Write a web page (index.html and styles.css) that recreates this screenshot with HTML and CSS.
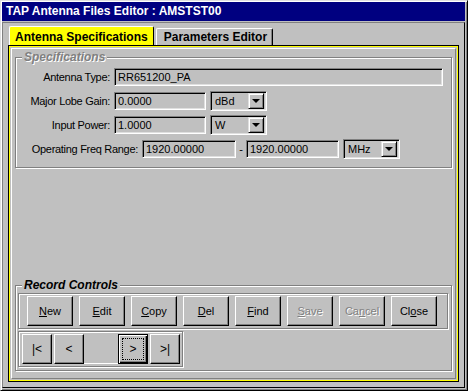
FILE: index.html
```
<!DOCTYPE html>
<html>
<head>
<meta charset="utf-8">
<link rel="stylesheet" href="styles.css">
</head>
<body>
<div class="window">
  <div class="titlebar">TAP Antenna Files Editor : AMSTST00</div>
  <div class="client">
    <div class="tabs">
      <div class="tab active">Antenna Specifications</div>
      <div class="tab">Parameters Editor</div>
    </div>
    <div class="panel">
      <div class="page">
        <div class="group spec">
          <div class="legend disabled">Specifications</div>
          <div class="row">
            <span class="label w1">Antenna Type:</span>
            <span class="field long">RR651200_PA</span>
          </div>
          <div class="row">
            <span class="label w1">Major Lobe Gain:</span>
            <span class="field short">0.0000</span>
            <span class="combo"><span class="ctext">dBd</span><span class="arrow"></span></span>
          </div>
          <div class="row">
            <span class="label w1">Input Power:</span>
            <span class="field short">1.0000</span>
            <span class="combo"><span class="ctext">W</span><span class="arrow"></span></span>
          </div>
          <div class="row">
            <span class="label w2">Operating Freq Range:</span>
            <span class="field freq1">1920.00000</span>
            <span class="dash">-</span>
            <span class="field freq2">1920.00000</span>
            <span class="combo"><span class="ctext">MHz</span><span class="arrow"></span></span>
          </div>
        </div>
        <div class="spacer"></div>
        <div class="group record">
          <div class="legend">Record Controls</div>
          <div class="btnbar">
            <span class="btn"><u>N</u>ew</span>
            <span class="btn"><u>E</u>dit</span>
            <span class="btn"><u>C</u>opy</span>
            <span class="btn"><u>D</u>el</span>
            <span class="btn"><u>F</u>ind</span>
            <span class="btn off"><u>S</u>ave</span>
            <span class="btn off">Ca<u>n</u>cel</span>
            <span class="btn">Cl<u>o</u>se</span>
          </div>
          <div class="navbar">
            <span class="nbtn">|&lt;</span>
            <span class="nbtn">&lt;</span>
            <span class="nfield"></span>
            <span class="nbtn focus"><span class="fr">&gt;</span></span>
            <span class="nbtn">&gt;|</span>
          </div>
        </div>
      </div>
    </div>
  </div>
</div>
</body>
</html>
```
FILE: styles.css
```
html, body {
  margin: 0;
  padding: 0;
  background: #c0c0c0;
}
body {
  font-family: "Liberation Sans", Arial, sans-serif;
  font-size: 11px;
  color: #000;
}
.window {
  width: 468px;
  height: 391px;
  box-sizing: border-box;
  background: #c0c0c0;
  border-top: 1px solid #dfdfdf;
  border-left: 1px solid #dfdfdf;
  border-right: 1px solid #000;
  border-bottom: 1px solid #000;
  box-shadow: inset 1px 1px 0 #fff, inset -1px -1px 0 #808080;
  padding: 1px 2px 2px 1px;
  display: flex;
  flex-direction: column;
}
.titlebar {
  height: 19px;
  background: #000080;
  color: #fff;
  font-weight: bold;
  font-size: 12px;
  line-height: 19px;
  padding-left: 4px;
  flex: none;
}
.client {
  flex: 1;
  margin-top: 1px;
  border-top: 1px solid #808080;
  border-left: 1px solid #808080;
  border-right: 1px solid #000;
  border-bottom: 1px solid #000;
  padding: 3px 6px 6px 6px;
  display: flex;
  flex-direction: column;
}
.tabs {
  display: flex;
  height: 20px;
  align-items: flex-end;
  flex: none;
}
.tab {
  font-weight: bold;
  font-size: 12px;
  height: 18px;
  box-sizing: border-box;
  line-height: 17px;
  padding: 0 5px 0 7px;
  border-top: 1px solid #fff;
  border-left: 1px solid #fff;
  border-right: 1px solid #000;
  border-radius: 2px 2px 0 0;
  box-shadow: inset -1px 0 0 #808080;
  margin-left: 2px;
}
.tab.active {
  background: #ffff00;
  height: 20px;
  line-height: 20px;
  padding: 0 5px 0 5px;
  margin-left: 0;
  box-shadow: none;
}
.panel {
  flex: 1;
  border: 1px solid #ffff00;
  outline: 1px solid #000;
  outline-offset: 0;
  padding: 1px;
  display: flex;
  flex-direction: column;
}
.page {
  flex: 1;
  border-top: 1px solid #fff;
  border-left: 1px solid #fff;
  border-right: 1px solid #808080;
  border-bottom: 1px solid #808080;
  padding: 8px 3px 7px 3px;
  display: flex;
  flex-direction: column;
}
.group {
  position: relative;
  box-sizing: border-box;
  border: 1px solid #808080;
  box-shadow: 1px 1px 0 #fff, inset 1px 1px 0 #fff;
  flex: none;
}
.legend {
  position: absolute;
  top: -8px;
  left: 6px;
  padding: 0 2px;
  background: #c0c0c0;
  font-weight: bold;
  font-style: italic;
  font-size: 12px;
  line-height: 14px;
}
.legend.disabled {
  color: #808080;
  text-shadow: 1px 1px 0 #fff;
}
.spec {
  height: 111px;
  padding-top: 10px;
}
.row {
  display: flex;
  align-items: center;
  height: 18px;
  margin-bottom: 6px;
}
.label {
  text-align: right;
  padding-right: 4px;
  box-sizing: border-box;
  letter-spacing: -0.3px;
}
.w1 { width: 98px; }
.w2 { width: 126px; }
.field, .combo {
  box-sizing: border-box;
  height: 18px;
  border-top: 1px solid #808080;
  border-left: 1px solid #808080;
  border-right: 1px solid #fff;
  border-bottom: 1px solid #fff;
  box-shadow: inset 1px 1px 0 #000, inset -1px -1px 0 #dfdfdf;
  padding: 0 3px;
  line-height: 16px;
}
.long { width: 329px; }
.short { width: 92px; }
.freq1 { width: 94px; }
.freq2 { width: 93px; }
.combo {
  display: flex;
  align-items: center;
  width: 57px;
  height: 20px;
  margin-left: 4px;
  padding: 2px 2px 2px 4px;
  justify-content: space-between;
}
.dash {
  width: 10px;
  text-align: center;
}
.arrow {
  width: 16px;
  height: 16px;
  box-sizing: border-box;
  background: #c0c0c0;
  border-top: 1px solid #dfdfdf;
  border-left: 1px solid #dfdfdf;
  border-right: 1px solid #000;
  border-bottom: 1px solid #000;
  box-shadow: inset 1px 1px 0 #fff, inset -1px -1px 0 #808080;
  position: relative;
}
.arrow::after {
  content: "";
  position: absolute;
  left: 3px;
  top: 5px;
  border-left: 4px solid transparent;
  border-right: 4px solid transparent;
  border-top: 4px solid #000;
}
.spacer { flex: 1; }
.record {
  height: 86px;
  padding: 7px 3px 2px 2px;
}
.btnbar {
  height: 36px;
  box-sizing: border-box;
  border: 1px solid #808080;
  box-shadow: inset 1px 1px 0 #fff, 1px 1px 0 #fff;
  display: flex;
  align-items: center;
  padding-left: 8px;
  gap: 6px;
}
.btn, .nbtn {
  box-sizing: border-box;
  width: 46px;
  height: 30px;
  display: flex;
  align-items: center;
  justify-content: center;
  border-top: 1px solid #fff;
  border-left: 1px solid #fff;
  border-right: 1px solid #000;
  border-bottom: 1px solid #000;
  box-shadow: inset -1px -1px 0 #808080;
}
.btn.off {
  color: #808080;
  text-shadow: 1px 1px 0 #fff;
}
.navbar {
  margin-top: 2px;
  width: 165px;
  height: 36px;
  box-sizing: border-box;
  border: 1px solid #808080;
  box-shadow: inset 1px 1px 0 #fff, 1px 1px 0 #fff;
  display: flex;
  align-items: center;
  padding-left: 3px;
  gap: 2px;
}
.nbtn {
  width: 30px;
  font-size: 12px;
}
.nfield {
  box-sizing: border-box;
  width: 34px;
  height: 30px;
  margin: 0 -2px;
  border-bottom: 1px solid #fff;
}
.nbtn.focus {
  border: 1px solid #000;
  box-shadow: inset 1px 1px 0 #fff, inset -1px -1px 0 #000, inset -2px -2px 0 #808080;
}
.fr {
  width: 22px;
  height: 22px;
  box-sizing: border-box;
  border: 1px dotted #000;
  display: flex;
  align-items: center;
  justify-content: center;
}
```
